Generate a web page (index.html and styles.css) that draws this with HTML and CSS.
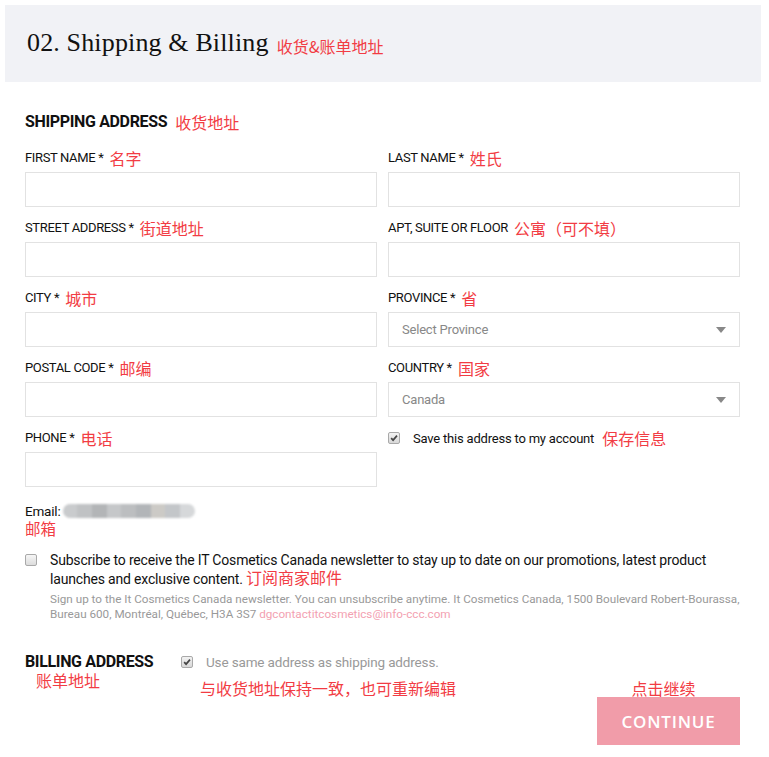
FILE: index.html
```html
<!DOCTYPE html>
<html lang="en">
<head>
<meta charset="utf-8">
<title>Shipping &amp; Billing</title>
<link rel="stylesheet" href="styles.css">
</head>
<body>
<div class="page">
  <header class="header">
    <h1 class="title">02. Shipping &amp; Billing</h1>
    <span class="cn cn-title">收货&amp;账单地址</span>
  </header>
  <main class="main">
    <h2 class="section-title">SHIPPING ADDRESS <span class="cn">收货地址</span></h2>
    <div class="grid">
      <div class="field">
        <label class="label"><span>FIRST NAME *</span><span class="cn">名字</span></label>
        <div class="input"></div>
      </div>
      <div class="field">
        <label class="label"><span>LAST NAME *</span><span class="cn">姓氏</span></label>
        <div class="input"></div>
      </div>
      <div class="field">
        <label class="label"><span>STREET ADDRESS *</span><span class="cn">街道地址</span></label>
        <div class="input"></div>
      </div>
      <div class="field">
        <label class="label"><span>APT, SUITE OR FLOOR</span><span class="cn">公寓（可不填）</span></label>
        <div class="input"></div>
      </div>
      <div class="field">
        <label class="label"><span>CITY *</span><span class="cn">城市</span></label>
        <div class="input"></div>
      </div>
      <div class="field">
        <label class="label"><span>PROVINCE *</span><span class="cn">省</span></label>
        <div class="input select"><span class="placeholder">Select Province</span><span class="arrow"></span></div>
      </div>
      <div class="field">
        <label class="label"><span>POSTAL CODE *</span><span class="cn">邮编</span></label>
        <div class="input"></div>
      </div>
      <div class="field">
        <label class="label"><span>COUNTRY *</span><span class="cn">国家</span></label>
        <div class="input select"><span class="placeholder">Canada</span><span class="arrow"></span></div>
      </div>
      <div class="field">
        <label class="label"><span>PHONE *</span><span class="cn">电话</span></label>
        <div class="input"></div>
      </div>
      <div class="field">
        <div class="check-row">
          <span class="box"><svg viewBox="0 0 12 12" width="12" height="12"><path d="M2.6 6.2 L4.9 8.6 L9.6 3.2" fill="none" stroke="#444" stroke-width="2"/></svg></span>
          <span class="save-text">Save this address to my account</span>
          <span class="cn">保存信息</span>
        </div>
      </div>
    </div>

    <div class="email">
      <div class="email-line">Email: <span class="blur"><i></i><i></i><i></i><i></i><i></i><i></i><i></i><i></i><i></i></span></div>
      <div class="cn email-cn">邮箱</div>
    </div>

    <div class="subscribe">
      <span class="box empty"></span>
      <div class="sub-body">
        <p class="sub-text">Subscribe to receive the IT Cosmetics Canada newsletter to stay up to date on our promotions, latest product<br>launches and exclusive content. <span class="cn">订阅商家邮件</span></p>
        <p class="fine">Sign up to the It Cosmetics Canada newsletter. You can unsubscribe anytime. It Cosmetics Canada, 1500 Boulevard Robert-Bourassa,<br>Bureau 600, Montréal, Québec, H3A 3S7 <span class="link">dgcontactitcosmetics@info-ccc.com</span></p>
      </div>
    </div>

    <div class="billing">
      <div class="bill-left">
        <div class="section-title">BILLING ADDRESS</div>
        <div class="cn bill-cn">账单地址</div>
      </div>
      <div class="bill-mid">
        <div class="check-row">
          <span class="box"><svg viewBox="0 0 12 12" width="12" height="12"><path d="M2.6 6.2 L4.9 8.6 L9.6 3.2" fill="none" stroke="#444" stroke-width="2"/></svg></span>
          <span class="same-text">Use same address as shipping address.</span>
        </div>
        <div class="cn bill-note">与收货地址保持一致，也可重新编辑</div>
      </div>
      <div class="bill-right">
        <div class="cn go-note">点击继续</div>
        <button class="continue">CONTINUE</button>
      </div>
    </div>
  </main>
</div>
</body>
</html>
```

FILE: styles.css
```css
* { box-sizing: border-box; }
html, body { margin: 0; padding: 0; background: #fff; }
body {
  font-family: Roboto, "Noto Sans", Arial, "Noto Sans CJK SC", sans-serif;
  color: #111;
}
.page { padding: 5px 8px 0 5px; width: 769px; }
.cn {
  font-family: "Noto Sans CJK SC", "Noto Sans", sans-serif;
  color: #f23c44;
  font-size: 16px;
  font-weight: 400;
  letter-spacing: 0;
}
.header {
  height: 77px;
  background: #f1f2f6;
  display: flex;
  align-items: center;
  padding-left: 22px;
  gap: 8px;
}
.title {
  margin: 0;
  font-family: "Liberation Serif", "DejaVu Serif", serif;
  font-weight: 400;
  font-size: 26px;
  color: #111;
  letter-spacing: 0.15px;
  position: relative;
  top: -1px;
}
.cn-title { font-size: 16px; position: relative; top: 2px; }
.main { padding: 0 21px 0 20px; }
.section-title {
  margin: 30px 0 0;
  height: 20px;
  line-height: 20px;
  font-size: 16px;
  font-weight: 700;
  letter-spacing: -0.35px;
  color: #111;
  display: flex;
  align-items: center;
}
.section-title .cn { margin-left: 8px; line-height: 20px; }
.grid {
  margin-top: 16px;
  display: grid;
  grid-template-columns: 352px 352px;
  column-gap: 11px;
  row-gap: 11px;
}
.label {
  display: flex;
  align-items: center;
  height: 20px;
  line-height: 20px;
  font-size: 13px;
  letter-spacing: -0.35px;
  color: #111;
  margin-bottom: 4px;
  white-space: nowrap;
}
.label .cn { margin-left: 6px; line-height: 20px; }
.input {
  height: 35px;
  border: 1px solid #e2e2e2;
  background: #fff;
}
.select {
  display: flex;
  align-items: center;
  justify-content: space-between;
  padding: 0 13px 0 13px;
}
.placeholder { font-size: 13px; color: #888; letter-spacing: -0.2px; }
.arrow {
  width: 0; height: 0;
  border-left: 5px solid transparent;
  border-right: 5px solid transparent;
  border-top: 6px solid #888;
}
.check-row {
  display: flex;
  align-items: center;
  height: 20px;
}
.box {
  width: 12px; height: 12px;
  border: 1px solid #a9a9a9;
  border-radius: 2px;
  background: linear-gradient(#f2f2f2, #d8d8d8);
  display: inline-flex;
  align-items: center;
  justify-content: center;
  flex: none;
}
.box svg { display: block; width: 10px; height: 10px; }
.save-text { margin-left: 13px; font-size: 13px; letter-spacing: -0.2px; color: #111; }
.check-row .cn { margin-left: 8px; line-height: 20px; }
.email { margin-top: 16px; }
.email-line { font-size: 13.5px; line-height: 16px; height: 16px; display: flex; align-items: center; letter-spacing: -0.2px; }
.blur {
  display: inline-flex;
  margin-left: 2px;
  height: 14px;
  width: 132px;
  border-radius: 7px;
  overflow: hidden;
  filter: blur(1px);
}
.blur i { flex: 1; background: #c9cbcd; }
.blur i:nth-child(2) { background: #c0c2c4; }
.blur i:nth-child(3) { background: #b3b5b7; }
.blur i:nth-child(4) { background: #c5c7c9; }
.blur i:nth-child(5) { background: #bcbec0; }
.blur i:nth-child(6) { background: #b2b5b8; }
.blur i:nth-child(7) { background: #cccac6; }
.blur i:nth-child(8) { background: #c3c6c9; }
.blur i:nth-child(9) { background: #d6d8da; }
.email-cn { line-height: 16px; height: 16px; font-size: 15.5px; margin-top: 1px; }
.subscribe {
  margin-top: 16px;
  display: flex;
  align-items: flex-start;
}
.subscribe .box.empty { margin-top: 2px; width: 12px; height: 12px; background: linear-gradient(#f6f6f6, #dcdcdc); }
.sub-body { margin-left: 13px; }
.sub-text {
  margin: 0;
  font-size: 14px;
  line-height: 17px;
  letter-spacing: -0.18px;
  color: #111;
}
.sub-text .cn { line-height: 1; }
.fine {
  margin: 4px 0 0;
  font-size: 11.7px;
  line-height: 15px;
  color: #999;
  letter-spacing: 0;
  white-space: nowrap;
}
.link { color: #f3a1b1; }
.billing {
  margin-top: 30px;
  display: flex;
  align-items: flex-start;
}
.bill-left { width: 156px; }
.bill-left .section-title { margin: 0; }
.bill-cn { margin-left: 11px; line-height: 17px; font-size: 16px; margin-top: 0; }
.same-text { margin-left: 13px; font-size: 13.5px; color: #999; letter-spacing: -0.15px; }
.bill-note { margin-top: 6px; margin-left: 19px; font-size: 16px; line-height: 20px; }
.bill-right {
  margin-left: auto;
  padding-top: 28px;
  display: flex;
  flex-direction: column;
  align-items: center;
}
.go-note { font-size: 16px; line-height: 17px; margin-right: 10px; }
.continue {
  width: 143px;
  height: 48px;
  background: #f19ca9;
  border: 0;
  color: #fff;
  font-family: "Open Sans", Roboto, sans-serif;
  font-weight: 600;
  font-size: 17px;
  letter-spacing: 0.8px;
  padding: 0;
}
```
